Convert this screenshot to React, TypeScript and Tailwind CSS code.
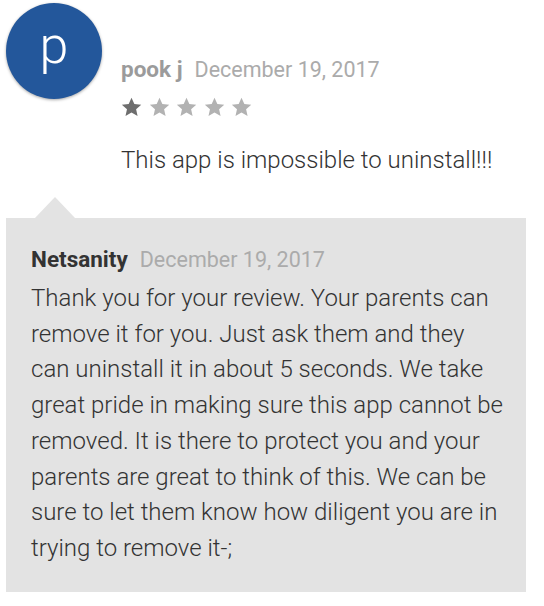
import React from "react";

const Star = ({ color }: { color: string }) => (
  <svg width="21" height="20" viewBox="0 0 24 23" className="mr-[6.5px]">
    <path
      d="M12 0.8l3.3 7.2 7.9 0.8-5.9 5.3 1.7 7.8L12 17.9l-6.9 4 1.7-7.8L0.9 8.8l7.9-0.8z"
      fill={color}
    />
  </svg>
);

export default function App() {
  return (
    <div
      className="w-[544px] h-[606px] bg-white overflow-hidden"
      style={{ fontFamily: "Roboto, 'Liberation Sans', sans-serif" }}
    >
      <div className="flex pl-[6px] pt-[3px]">
        <div className="w-[96px] h-[96px] rounded-full bg-[#23579b] flex items-center justify-center shadow-[0_1px_3px_rgba(0,0,0,0.35)] shrink-0">
          <span className="text-white text-[52px] font-light leading-none -mt-[10px]">p</span>
        </div>
        <div className="ml-[19px] pt-[52px]">
          <div className="flex items-baseline leading-[28px]">
            <span className="font-bold text-[22.5px] text-[#9b9b9b]">pook j</span>
            <span className="ml-[12px] text-[21.5px] text-[#ababab]">December 19, 2017</span>
          </div>
          <div className="flex mt-[13px]">
            <Star color="#6e6e6e" />
            <Star color="#b2b2b2" />
            <Star color="#b2b2b2" />
            <Star color="#b2b2b2" />
            <Star color="#b2b2b2" />
          </div>
          <div className="mt-[25px] text-[24px] font-light text-[#333333] leading-[36px]">
            This app is impossible to uninstall!!!
          </div>
        </div>
      </div>
      <div className="mt-[19px] ml-[35px] w-0 h-0 border-l-[20px] border-r-[20px] border-b-[21px] border-l-transparent border-r-transparent border-b-[#e3e3e3]" />
      <div className="ml-[6px] w-[520px] bg-[#e3e3e3] pl-[25px] pr-[22px] pt-[27px] pb-[25px]">
        <div className="flex items-baseline leading-[28px]">
          <span className="font-bold text-[22.5px] text-[#333333]">Netsanity</span>
          <span className="ml-[12px] text-[21.5px] text-[#ababab]">December 19, 2017</span>
        </div>
        <p className="mt-[7px] text-[24px] font-light text-[#333333] leading-[35.7px]">
          Thank you for your review. Your parents can remove it for you. Just ask them and they can uninstall it in about 5 seconds. We take great pride in making sure this app cannot be removed. It is there to protect you and your parents are great to think of this. We can be sure to let them know how diligent you are in trying to remove it-;
        </p>
      </div>
    </div>
  );
}
